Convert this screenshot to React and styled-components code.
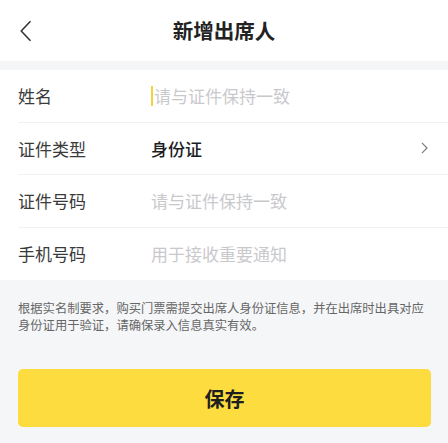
import React from 'react';
import styled, { createGlobalStyle } from 'styled-components';

const GlobalStyle = createGlobalStyle`
  html, body {
    margin: 0;
    padding: 0;
    background: #f5f6f8;
    font-family: 'Noto Sans CJK SC', 'Noto Sans', sans-serif;
  }
`;

const Page = styled.div`
  width: 448px;
  height: 443px;
  overflow: hidden;
  background: #f5f6f8;
`;

const Header = styled.div`
  height: 61px;
  background: #fff;
  display: flex;
  align-items: center;
  justify-content: center;
  position: relative;
`;

const BackButton = styled.button`
  position: absolute;
  left: 15px;
  top: 19px;
  width: 22px;
  height: 24px;
  padding: 0;
  border: none;
  background: none;
  display: flex;
  align-items: center;
  justify-content: center;
`;

const Title = styled.h1`
  margin: 0;
  font-size: 20.5px;
  font-weight: 700;
  color: #222;
  line-height: 1;
  margin-top: -1px;
`;

const Form = styled.div`
  margin-top: 9px;
  background: #fff;
  padding-left: 18px;
`;

const Row = styled.div`
  height: 52.5px;
  display: flex;
  align-items: center;
  padding-right: 20px;
  border-bottom: ${({ last }) => (last ? 'none' : '1px solid #f1f1f3')};
  box-sizing: border-box;
`;

const Label = styled.div`
  width: 133px;
  font-size: 17px;
  color: #3a3a3a;
`;

const Value = styled.div`
  flex: 1;
  font-size: 17px;
  display: flex;
  align-items: center;
  color: ${({ placeholder }) => (placeholder ? '#c9c9cc' : '#1e1e1e')};
  font-weight: ${({ placeholder }) => (placeholder ? 400 : 500)};
`;

const Caret = styled.span`
  display: inline-block;
  width: 2px;
  height: 20px;
  background: #f2d33c;
  margin-right: 1px;
`;

const Note = styled.p`
  margin: 0;
  padding: 20px 18px 0;
  font-size: 12.3px;
  line-height: 17px;
  color: #666;
`;

const SaveButton = styled.button`
  display: block;
  margin: 35px 17px 0 18px;
  width: 413px;
  height: 58px;
  border: none;
  border-radius: 5px;
  background: #fddc3f;
  font-family: inherit;
  font-size: 20px;
  font-weight: 700;
  color: #1e1e1e;
`;

const Chevron = ({ dir, size, color, stroke }) => (
  <svg width={size * 0.6} height={size} viewBox="0 0 12 20" fill="none">
    <path
      d={dir === 'left' ? 'M10 1.5 L2 10 L10 18.5' : 'M2 2 L10 10 L2 18'}
      stroke={color}
      strokeWidth={stroke}
      strokeLinecap="round"
      strokeLinejoin="round"
    />
  </svg>
);

const fields = [
  { label: '姓名', value: '请与证件保持一致', placeholder: true, caret: true },
  { label: '证件类型', value: '身份证', arrow: true },
  { label: '证件号码', value: '请与证件保持一致', placeholder: true },
  { label: '手机号码', value: '用于接收重要通知', placeholder: true },
];

export default function App() {
  return (
    <Page>
      <GlobalStyle />
      <Header>
        <BackButton>
          <Chevron dir="left" size={22} color="#333" stroke={1.4} />
        </BackButton>
        <Title>新增出席人</Title>
      </Header>
      <Form>
        {fields.map((f, i) => (
          <Row key={f.label} last={i === fields.length - 1}>
            <Label>{f.label}</Label>
            <Value placeholder={f.placeholder}>
              {f.caret && <Caret />}
              {f.value}
            </Value>
            {f.arrow && <Chevron dir="right" size={12} color="#777" stroke={1.8} />}
          </Row>
        ))}
      </Form>
      <Note>
        根据实名制要求，购买门票需提交出席人身份证信息，并在出席时出具对应身份证用于验证，请确保录入信息真实有效。
      </Note>
      <SaveButton>保存</SaveButton>
    </Page>
  );
}
